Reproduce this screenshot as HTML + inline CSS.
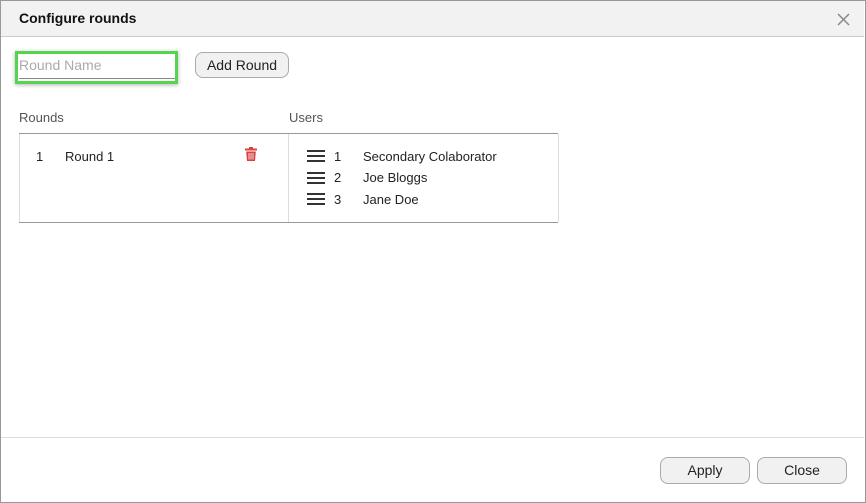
<!DOCTYPE html>
<html><head><style>
body{margin:0;width:866px;height:503px;background:#fff;font-family:"Liberation Sans",sans-serif;color:#222;position:relative;overflow:hidden}
.a{position:absolute}
.btn{position:absolute;border:1px solid #aaa;border-radius:8px;background:#f1f1f1;font-size:14px;text-align:center;box-sizing:border-box;color:#222}
.t{position:absolute;font-size:13px;color:#222}
</style></head><body>
<div class="a" style="left:0;top:0;width:864px;height:501px;border:1px solid #999"></div>
<div class="a" style="left:1px;top:1px;width:863px;height:35px;background:#f2f2f2;border-bottom:1px solid #ccc"></div>
<div class="a" style="left:19px;top:10px;font-size:14px;font-weight:bold;color:#111">Configure rounds</div>
<svg class="a" style="left:837px;top:13px" width="13" height="13"><path d="M1 1L12 12M12 1L1 12" stroke="#888" stroke-width="1.5"/></svg>
<div class="a" style="left:15px;top:51px;width:163px;height:33px;border:3px solid #55d44f;box-sizing:border-box;box-shadow:0 1px 4px rgba(0,0,0,.3)"></div>
<div class="a" style="left:19px;top:78px;width:156px;height:1px;background:#888"></div>
<div class="a" style="left:19px;top:57px;font-size:14px;color:#aaa">Round Name</div>
<div class="btn" style="left:195px;top:52px;width:94px;height:26px;line-height:24px">Add Round</div>
<div class="t" style="left:19px;top:110px;color:#555">Rounds</div>
<div class="t" style="left:289px;top:110px;color:#555">Users</div>
<div class="a" style="left:19px;top:133px;width:539px;height:88px;border-top:1px solid #999;border-bottom:1px solid #999"></div>
<div class="a" style="left:19px;top:134px;width:1px;height:88px;background:#ddd"></div>
<div class="a" style="left:288px;top:134px;width:1px;height:88px;background:#ddd"></div>
<div class="a" style="left:558px;top:134px;width:1px;height:88px;background:#ddd"></div>
<div class="t" style="left:36px;top:149px">1</div>
<div class="t" style="left:65px;top:149px">Round 1</div>
<svg class="a" style="left:245px;top:147px" width="12" height="14"><rect x="0" y="1.5" width="12" height="2" fill="#d9413f"/><rect x="4" y="0" width="4" height="2" fill="#d9413f"/><path d="M1.2 4.5H10.8L10 14H2Z" fill="#d9413f"/><path d="M4 6V12.5M6 6V12.5M8 6V12.5" stroke="#fff" stroke-width=".8"/></svg>
<svg class="a" style="left:307px;top:150px" width="18" height="12"><path d="M0 1H18M0 6H18M0 11H18" stroke="#333" stroke-width="2"/></svg>
<svg class="a" style="left:307px;top:172px" width="18" height="12"><path d="M0 1H18M0 6H18M0 11H18" stroke="#333" stroke-width="2"/></svg>
<svg class="a" style="left:307px;top:193px" width="18" height="12"><path d="M0 1H18M0 6H18M0 11H18" stroke="#333" stroke-width="2"/></svg>
<div class="t" style="left:334px;top:149px">1</div>
<div class="t" style="left:334px;top:170px">2</div>
<div class="t" style="left:334px;top:192px">3</div>
<div class="t" style="left:363px;top:149px">Secondary Colaborator</div>
<div class="t" style="left:363px;top:170px">Joe Bloggs</div>
<div class="t" style="left:363px;top:192px">Jane Doe</div>
<div class="a" style="left:1px;top:437px;width:863px;height:1px;background:#ddd"></div>
<div class="btn" style="left:660px;top:457px;width:90px;height:27px;line-height:25px">Apply</div>
<div class="btn" style="left:757px;top:457px;width:90px;height:27px;line-height:25px">Close</div>
</body></html>
